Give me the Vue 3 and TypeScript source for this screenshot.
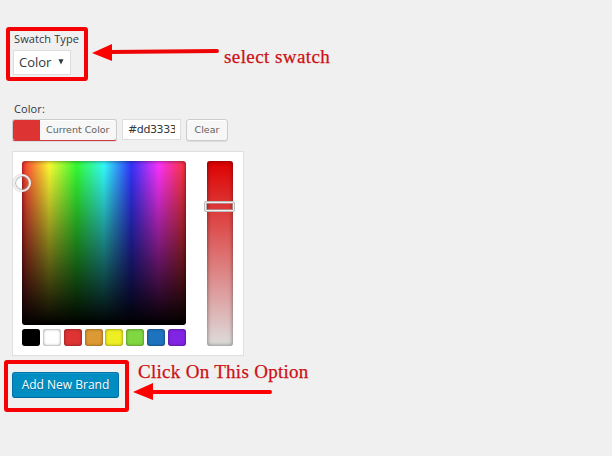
<script setup lang="ts">
import { ref } from 'vue'

const swatchType = ref('Color')
const color = ref('#dd3333')
const palette: string[] = ['#000000', '#ffffff', '#dd3333', '#dd9933', '#eeee22', '#81d742', '#1e73be', '#8224e3']
</script>

<template>
  <main class="page">
    <section class="field type-field">
      <label class="label type-label">Swatch Type</label>
      <button class="select"><span class="value">{{ swatchType }}</span><svg class="caret" width="6" height="6" viewBox="0 0 6 6"><path d="M0.5 0.2H5.5L3 5.4Z" fill="#32373c" /></svg></button>
    </section>

    <section class="field">
      <label class="label color-label">Color:</label>
      <div class="controls">
        <button class="current"><span class="chip" :style="{ background: color }"></span><span class="current-text">Current Color</span></button>
        <div class="hex"><span class="hex-text">{{ color }}</span></div>
        <button class="clear"><span class="clear-text">Clear</span></button>
      </div>
      <div class="picker">
        <div class="left">
          <div class="square"><span class="ring"></span></div>
          <div class="palette">
            <span v-for="c in palette" :key="c" class="swatch" :style="{ background: c }"></span>
          </div>
        </div>
        <div class="strip"><span class="handle"></span></div>
      </div>
    </section>

    <button class="submit"><span class="submit-text">Add New Brand</span></button>

    <div class="frame frame-type"></div>
    <div class="frame frame-submit"></div>
    <svg class="arrows" width="612" height="456" viewBox="0 0 612 456">
      <path d="M110 52L217 51" stroke="#ee0507" stroke-width="4" stroke-linecap="round" />
      <path d="M92 53L112 44V61Z" fill="#fe0000" />
      <path d="M151 392H270" stroke="#fe0000" stroke-width="4" stroke-linecap="round" />
      <path d="M133 392L153 383V400Z" fill="#fe0000" />
    </svg>
    <span class="note note-select">select swatch</span>
    <span class="note note-click">Click On This Option</span>
  </main>
</template>

<style>
body {
  background: #f0f0f0;
}
</style>

<style scoped>
.page {
  position: relative;
  box-sizing: border-box;
  width: 612px;
  height: 456px;
  padding: 31px 0 0 12px;
  overflow: hidden;
  background: #f0f0f0;
  color: #32373c;
  font-family: "Open Sans", "Noto Sans", sans-serif;
}
button {
  display: flex;
  align-items: center;
  box-sizing: border-box;
  margin: 0;
  padding: 0;
  color: inherit;
  font-family: inherit;
  white-space: nowrap;
}
.type-field {
  height: 70px;
}
.label {
  display: block;
  padding-left: 2px;
  font-size: 11px;
  line-height: 16px;
  letter-spacing: 0.1px;
}
.select {
  width: 58px;
  height: 25px;
  margin: 3px 0 0 1px;
  padding: 0 6px 2px 5px;
  justify-content: space-between;
  border: 1px solid #ddd;
  background: #fff;
  font-size: 13px;
}
.controls {
  display: flex;
  gap: 5px;
  height: 22px;
  margin-top: 2px;
}
.current,
.clear {
  height: 22px;
  padding-bottom: 1px;
  border: 1px solid #ccc;
  border-radius: 3px;
  background: #f7f7f7;
  box-shadow: inset 0 1px 0 #fff, 0 1px 0 rgba(0, 0, 0, 0.08);
  color: #606060;
  font-family: "DejaVu Sans", sans-serif;
  font-size: 9.5px;
}
.current {
  width: 105px;
  padding: 0;
  overflow: hidden;
  border-bottom-color: #d0393c;
}
.current-text {
  padding-bottom: 1px;
}
.chip {
  width: 27px;
  height: 20px;
  margin-right: 6px;
}
.hex {
  box-sizing: border-box;
  width: 59px;
  height: 21px;
  padding: 0 5px;
  border: 1px solid #ddd;
  background: #fff;
  font-family: "DejaVu Sans", sans-serif;
  font-size: 11px;
  line-height: 19px;
  letter-spacing: -0.4px;
}
.hex-text {
  display: block;
  overflow: hidden;
}
.clear {
  width: 42px;
  justify-content: center;
}
.picker {
  display: flex;
  gap: 21px;
  box-sizing: border-box;
  width: 232px;
  height: 205px;
  margin-top: 10px;
  padding: 9px;
  border: 1px solid #dfdfdf;
  background: #fff;
}
.left {
  width: 164px;
}
.square {
  position: relative;
  height: 164px;
  border-radius: 3px;
  background:
    linear-gradient(to bottom, rgba(0, 0, 0, 0), #000),
    linear-gradient(to right, #ff3333, #ffff33 16.67%, #33ff33 33.33%, #33ffff 50%, #3333ff 66.67%, #ff33ff 83.33%, #ff3333);
  box-shadow: inset 0 0 4px rgba(0, 0, 0, 0.6);
}
.ring {
  position: absolute;
  left: -9px;
  top: 13px;
  box-sizing: border-box;
  width: 18px;
  height: 18px;
  border: 2px solid #eee;
  border-radius: 50%;
  box-shadow: 0 0 1px #888, inset 0 0 1px 1px rgba(150, 150, 150, 0.7);
}
.palette {
  display: flex;
  justify-content: space-between;
  margin-top: 4px;
}
.swatch {
  width: 18px;
  height: 17px;
  border-radius: 3px;
  box-shadow: inset 0 0 3px rgba(0, 0, 0, 0.55);
}
.strip {
  position: relative;
  width: 26px;
  height: 185px;
  border-radius: 3px;
  background: linear-gradient(to bottom, #dd0000, #dddddd);
  box-shadow: inset 0 0 4px rgba(0, 0, 0, 0.5);
}
.handle {
  position: absolute;
  left: -3px;
  top: 40px;
  box-sizing: border-box;
  width: 31px;
  height: 11px;
  border: 1px solid #bbb;
  border-radius: 2px;
  box-shadow: inset 0 0 0 1px #f5eeee, inset 0 0 0 2px rgba(170, 150, 150, 0.8);
}
.submit {
  width: 107px;
  height: 26px;
  margin-top: 16px;
  padding-bottom: 1px;
  justify-content: center;
  border: 1px solid #0073aa;
  border-bottom-color: #006799;
  border-radius: 3px;
  background: #008ec2;
  box-shadow: inset 0 1px 0 #1696c8;
  color: #fff;
  font-size: 12px;
  text-shadow: 0 1px 1px #006799;
}
.frame {
  position: absolute;
  box-sizing: border-box;
  border: 4px solid #f70003;
  border-radius: 3px;
}
.frame-type {
  left: 6px;
  top: 27px;
  width: 82px;
  height: 54px;
}
.frame-submit {
  left: 4px;
  top: 360px;
  width: 125px;
  height: 52px;
}
.arrows {
  position: absolute;
  left: 0;
  top: 0;
}
.note {
  position: absolute;
  color: #cc1013;
  font-family: "Liberation Serif", serif;
  font-size: 19px;
  line-height: 22px;
  white-space: nowrap;
  -webkit-text-stroke: 0.25px #cc1013;
}
.note-select {
  left: 224px;
  top: 46px;
  letter-spacing: 0.42px;
}
.note-click {
  left: 138px;
  top: 361px;
  letter-spacing: 0.29px;
}
</style>
